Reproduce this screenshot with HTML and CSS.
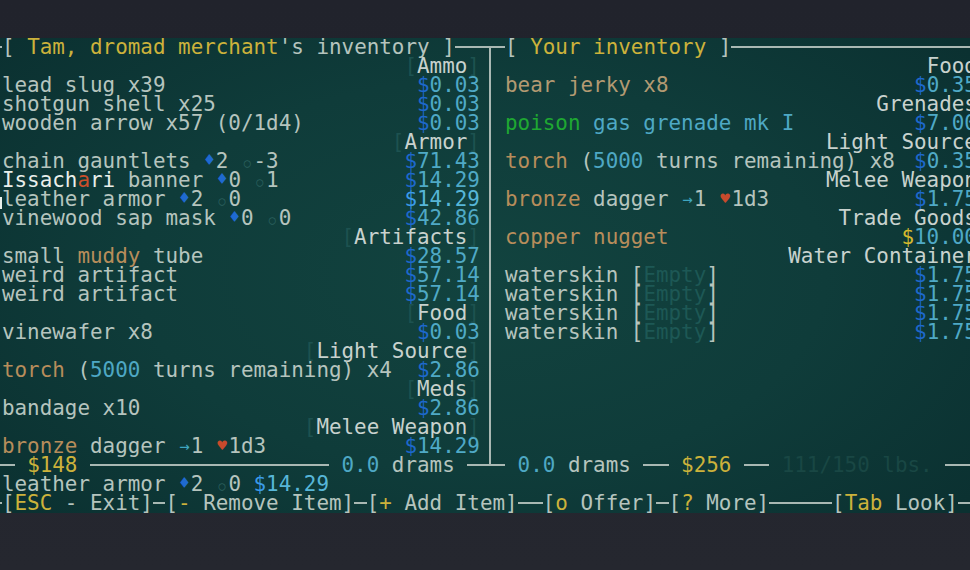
FILE: index.html
```html
<!DOCTYPE html>
<html>
<head>
<meta charset="utf-8">
<title>Trade</title>
<link rel="stylesheet" href="styles.css">
</head>
<body>
<div class="screen">
<div class="term">
  <div class="line"><span class="hl w1"></span><span>[ </span><span class="y">Tam, dromad merchant</span><span>'s inventory ]</span><span class="hl w2"></span><span class="tee-down"></span><span class="hl w1"></span><span>[ </span><span class="y">Your inventory</span><span> ]</span><span class="hl grow"></span></div>

  <div class="panels">
    <div class="lp">
      <div class="r cat"><span><span class="br">[</span><span class="ct">Ammo</span><span class="br">]</span></span></div>
      <div class="r"><span>lead slug x39</span><span class="pr"><span class="d">$</span>0.03</span></div>
      <div class="r"><span>shotgun shell x25</span><span class="pr"><span class="d">$</span>0.03</span></div>
      <div class="r"><span>wooden arrow x57 (0/1d4)</span><span class="pr"><span class="d">$</span>0.03</span></div>
      <div class="r cat"><span><span class="br">[</span><span class="ct">Armor</span><span class="br">]</span></span></div>
      <div class="r"><span>chain gauntlets <span class="s dia">♦</span>2 <span class="s circ">○</span>-3</span><span class="pr"><span class="d">$</span>71.43</span></div>
      <div class="r"><span><span class="w">Issach</span><span class="red">a</span><span class="w">ri</span> banner <span class="s dia">♦</span>0 <span class="s circ">○</span>1</span><span class="pr"><span class="d">$</span>14.29</span></div>
      <div class="r"><span><span class="cur"></span>leather armor <span class="s dia">♦</span>2 <span class="s circ">○</span>0</span><span class="pr hi"><span class="d">$</span>14.29</span></div>
      <div class="r"><span>vinewood sap mask <span class="s dia">♦</span>0 <span class="s circ">○</span>0</span><span class="pr"><span class="d">$</span>42.86</span></div>
      <div class="r cat"><span><span class="br">[</span><span class="ct">Artifacts</span><span class="br">]</span></span></div>
      <div class="r"><span>small <span class="tan">muddy</span> tube</span><span class="pr"><span class="d">$</span>28.57</span></div>
      <div class="r"><span>weird artifact</span><span class="pr"><span class="d">$</span>57.14</span></div>
      <div class="r"><span>weird artifact</span><span class="pr"><span class="d">$</span>57.14</span></div>
      <div class="r cat"><span><span class="br">[</span><span class="ct">Food</span><span class="br">]</span></span></div>
      <div class="r"><span>vinewafer x8</span><span class="pr"><span class="d">$</span>0.03</span></div>
      <div class="r cat"><span><span class="br">[</span><span class="ct">Light Source</span><span class="br">]</span></span></div>
      <div class="r"><span><span class="tan">torch</span> (<span class="c">5000</span> turns remaining) x4</span><span class="pr"><span class="d">$</span>2.86</span></div>
      <div class="r cat"><span><span class="br">[</span><span class="ct">Meds</span><span class="br">]</span></span></div>
      <div class="r"><span>bandage x10</span><span class="pr"><span class="d">$</span>2.86</span></div>
      <div class="r cat"><span><span class="br">[</span><span class="ct">Melee Weapon</span><span class="br">]</span></span></div>
      <div class="r"><span><span class="tan">bronze</span> dagger <span class="s arr">→</span>1 <span class="s heart">♥</span>1d3</span><span class="pr"><span class="d">$</span>14.29</span></div>
    </div>
    <div class="div"></div>
    <div class="rp">
      <div class="r cat"><span class="ct">Food</span></div>
      <div class="r"><span class="tan2">bear jerky x8</span><span class="pr"><span class="d">$</span>0.35</span></div>
      <div class="r cat"><span class="ct">Grenades</span></div>
      <div class="r"><span><span class="g">poison</span> <span class="c">gas grenade mk I</span></span><span class="pr"><span class="d">$</span>7.00</span></div>
      <div class="r cat"><span class="ct">Light Source</span></div>
      <div class="r"><span><span class="tan">torch</span> (<span class="c">5000</span> turns remaining) x8</span><span class="pr"><span class="d">$</span>0.35</span></div>
      <div class="r cat"><span class="ct">Melee Weapon</span></div>
      <div class="r"><span><span class="tan">bronze</span> dagger <span class="s arr">→</span>1 <span class="s heart">♥</span>1d3</span><span class="pr"><span class="d">$</span>1.75</span></div>
      <div class="r cat"><span class="ct">Trade Goods</span></div>
      <div class="r"><span class="tan">copper nugget</span><span class="pr"><span class="yd">$</span>10.00</span></div>
      <div class="r cat"><span class="ct">Water Container</span></div>
      <div class="r"><span>waterskin [<span class="dim">Empty</span>]</span><span class="pr"><span class="d">$</span>1.75</span></div>
      <div class="r"><span>waterskin [<span class="dim">Empty</span>]</span><span class="pr"><span class="d">$</span>1.75</span></div>
      <div class="r"><span>waterskin [<span class="dim">Empty</span>]</span><span class="pr"><span class="d">$</span>1.75</span></div>
      <div class="r"><span>waterskin [<span class="dim">Empty</span>]</span><span class="pr"><span class="d">$</span>1.75</span></div>
      <div class="r"></div>
      <div class="r"></div>
      <div class="r"></div>
      <div class="r"></div>
      <div class="r"></div>
      <div class="r"></div>
    </div>
  </div>

  <div class="line"><span class="hl w2"></span><span> </span><span class="y">$148</span><span> </span><span class="hl w19"></span><span> </span><span class="c">0.0</span><span> drams </span><span class="hl w1"></span><span class="tee-up"></span><span class="hl w1"></span><span> </span><span class="c">0.0</span><span> drams </span><span class="hl w2"></span><span> </span><span class="y">$256</span><span> </span><span class="hl w2"></span><span> </span><span class="dimmer">111/150 lbs.</span><span> </span><span class="hl grow"></span></div>

  <div class="line"><span class="indent">leather armor <span class="s dia">♦</span>2 <span class="s circ">○</span>0 <span class="pr hi"><span class="d">$</span>14.29</span></span></div>

  <div class="line"><span class="hl w1"></span><span>[</span><span class="y">ESC</span><span> - Exit]</span><span class="hl w1"></span><span>[</span><span class="y">-</span><span> Remove Item]</span><span class="hl w1"></span><span>[</span><span class="y">+</span><span> Add Item]</span><span class="hl w2"></span><span>[</span><span class="y">o</span><span> Offer]</span><span class="hl w1"></span><span>[</span><span class="y">?</span><span> More]</span><span class="hl w5"></span><span>[</span><span class="y">Tab</span><span> Look]</span><span class="hl grow"></span></div>
</div>
</div>
</body>
</html>
```

FILE: styles.css
```css
html, body {
  margin: 0;
  padding: 0;
  overflow: hidden;
}

body {
  background: linear-gradient(to bottom, #21232c 0%, #23252e 60%, #25272f 100%);
  font-family: "DejaVu Sans Mono", monospace;
}

.screen {
  width: 970px;
  height: 570px;
  padding-top: 38px;
  box-sizing: border-box;
  overflow: hidden;
}

.term {
  --fg: #b5c4be;
  --line: #a9b8b3;
  margin-left: -10.6px;
  width: 80ch;
  font-size: 20.9px;
  line-height: 19px;
  color: var(--fg);
  background: radial-gradient(ellipse 62% 75% at 49% 50%, #12433f 0%, #0f3c3a 55%, #0b3131 100%);
}

.line,
.r {
  white-space: pre;
}

.line {
  display: flex;
  height: 19px;
}

.hl {
  height: 19px;
  background: linear-gradient(var(--line), var(--line)) 0 8px / 100% 2px no-repeat;
}
.w1 { width: 1ch; }
.w2 { width: 2ch; }
.w5 { width: 5ch; }
.w19 { width: 19ch; }
.grow { flex: 1; }

.tee-down {
  width: 1ch;
  height: 19px;
  background:
    linear-gradient(var(--line), var(--line)) 0 8px / 100% 2px no-repeat,
    linear-gradient(var(--line), var(--line)) 9px 8px / 2px 11px no-repeat;
}
.tee-up {
  width: 1ch;
  height: 19px;
  background:
    linear-gradient(var(--line), var(--line)) 0 8px / 100% 2px no-repeat,
    linear-gradient(var(--line), var(--line)) 9px 0 / 2px 10px no-repeat;
}

.panels {
  display: flex;
}

.lp {
  width: 38ch;
  padding-left: 1ch;
}

.div {
  width: 1ch;
  background: linear-gradient(var(--line), var(--line)) 9px 0 / 2px 100% no-repeat;
}

.rp {
  width: calc(38ch - 6px);
  padding-left: 1ch;
  padding-right: calc(1ch + 6px);
}

.r {
  display: flex;
  justify-content: space-between;
  height: 19px;
}
.r.cat {
  justify-content: flex-end;
}

.indent {
  padding-left: 1ch;
}

.ct { color: #c8d2ce; }
.br { color: #1d5250; }
.y { color: #ccb23b; }
.yd { color: #d4b92e; }
.w { color: #e9efeb; }
.red { color: #cc4f2b; }
.tan { color: #b78d5b; }
.tan2 { color: #b39a72; }
.c { color: #4ea8c4; }
.g { color: #1fa832; }
.dim { color: #1d5855; }
.dimmer { color: #194744; }

.pr { color: #4fa9c6; }
.d { color: #1d68cc; }
.pr.hi { color: #57b6d8; }
.pr.hi .d { color: #3a9ae8; }

.s {
  display: inline-block;
  width: 12.583px;
  height: 19px;
  line-height: 17px;
  text-align: center;
  vertical-align: top;
}
.dia { color: #1f6ad0; font-size: 18px; line-height: 16px; }
.circ { color: #2a5f5c; font-size: 12px; line-height: 22px; }
.arr { color: #3fa6c0; font-size: 17px; line-height: 18px; }
.heart { color: #c84a2c; font-size: 16px; }

.cur {
  display: inline-block;
  width: 1ch;
  height: 19px;
  margin-left: -1ch;
  vertical-align: top;
  background: linear-gradient(#e8eeea, #e8eeea) calc(100% + 1px) 7px / 4px 12px no-repeat;
}
```
